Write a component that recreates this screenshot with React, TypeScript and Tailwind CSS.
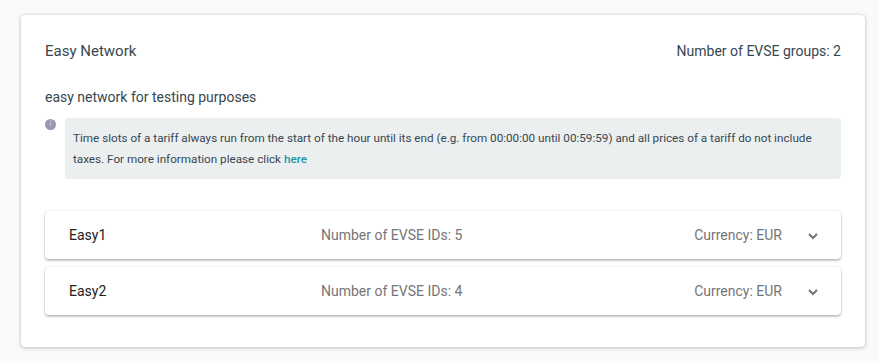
import React from "react";

function Chevron() {
  return (
    <svg width="12" height="8" viewBox="0 0 12 8" className="shrink-0">
      <path d="M2 2 L6 6 L10 2" fill="none" stroke="#757575" strokeWidth="2" />
    </svg>
  );
}

function Row({ name, ids }: { name: string; ids: number }) {
  return (
    <div className="flex h-[48px] items-center rounded-[4px] bg-white pl-[24px] pr-[22px] shadow-[0_1px_3px_rgba(0,0,0,0.2),0_2px_2px_rgba(0,0,0,0.12),0_0_2px_rgba(0,0,0,0.08)]">
      <div className="w-[252px] text-[14px] text-[#212121]">{name}</div>
      <div className="flex-1 text-[14px] text-[#757575]">Number of EVSE IDs: {ids}</div>
      <div className="text-[14px] text-[#757575]">Currency: EUR</div>
      <div className="ml-[25px] mt-[2px]">
        <Chevron />
      </div>
    </div>
  );
}

export default function App() {
  return (
    <div
      className="min-h-[361px] bg-[#fafafa] pl-[21px] pr-[14px] pt-[15px] pb-[14px]"
      style={{ fontFamily: "Roboto, 'Liberation Sans', sans-serif" }}
    >
      <div className="rounded-[4px] bg-white px-[24px] pt-[26px] pb-[32px] shadow-[0_1px_4px_rgba(0,0,0,0.22),0_0_2px_rgba(0,0,0,0.1)]">
        <div className="flex h-[20px] items-center justify-between text-[#37474f]">
          <span className="text-[15px]">Easy Network</span>
          <span className="text-[14px]">Number of EVSE groups: 2</span>
        </div>
        <div className="mt-[26px] h-[20px] text-[14px] leading-[20px] text-[#37474f]">
          easy network for testing purposes
        </div>
        <div className="mt-[11px] flex items-start gap-[9px]">
          <div className="mt-[1px] flex h-[11px] w-[11px] shrink-0 items-center justify-center rounded-full bg-[#9797b0]">
            <span className="text-[7px] font-bold leading-none text-[#c8c8d8]">i</span>
          </div>
          <p className="flex-1 rounded-[4px] bg-[#eceff0] px-[8px] py-[10px] text-[11.7px] leading-[20.5px] text-[#37474f]">
            Time slots of a tariff always run from the start of the hour until its end (e.g. from 00:00:00 until 00:59:59) and all prices of a tariff do not include taxes. For more information please click <a className="font-medium text-[#1d97a6]">here</a>
          </p>
        </div>
        <div className="mt-[32px] flex flex-col gap-[8px]">
          <Row name="Easy1" ids={5} />
          <Row name="Easy2" ids={4} />
        </div>
      </div>
    </div>
  );
}
